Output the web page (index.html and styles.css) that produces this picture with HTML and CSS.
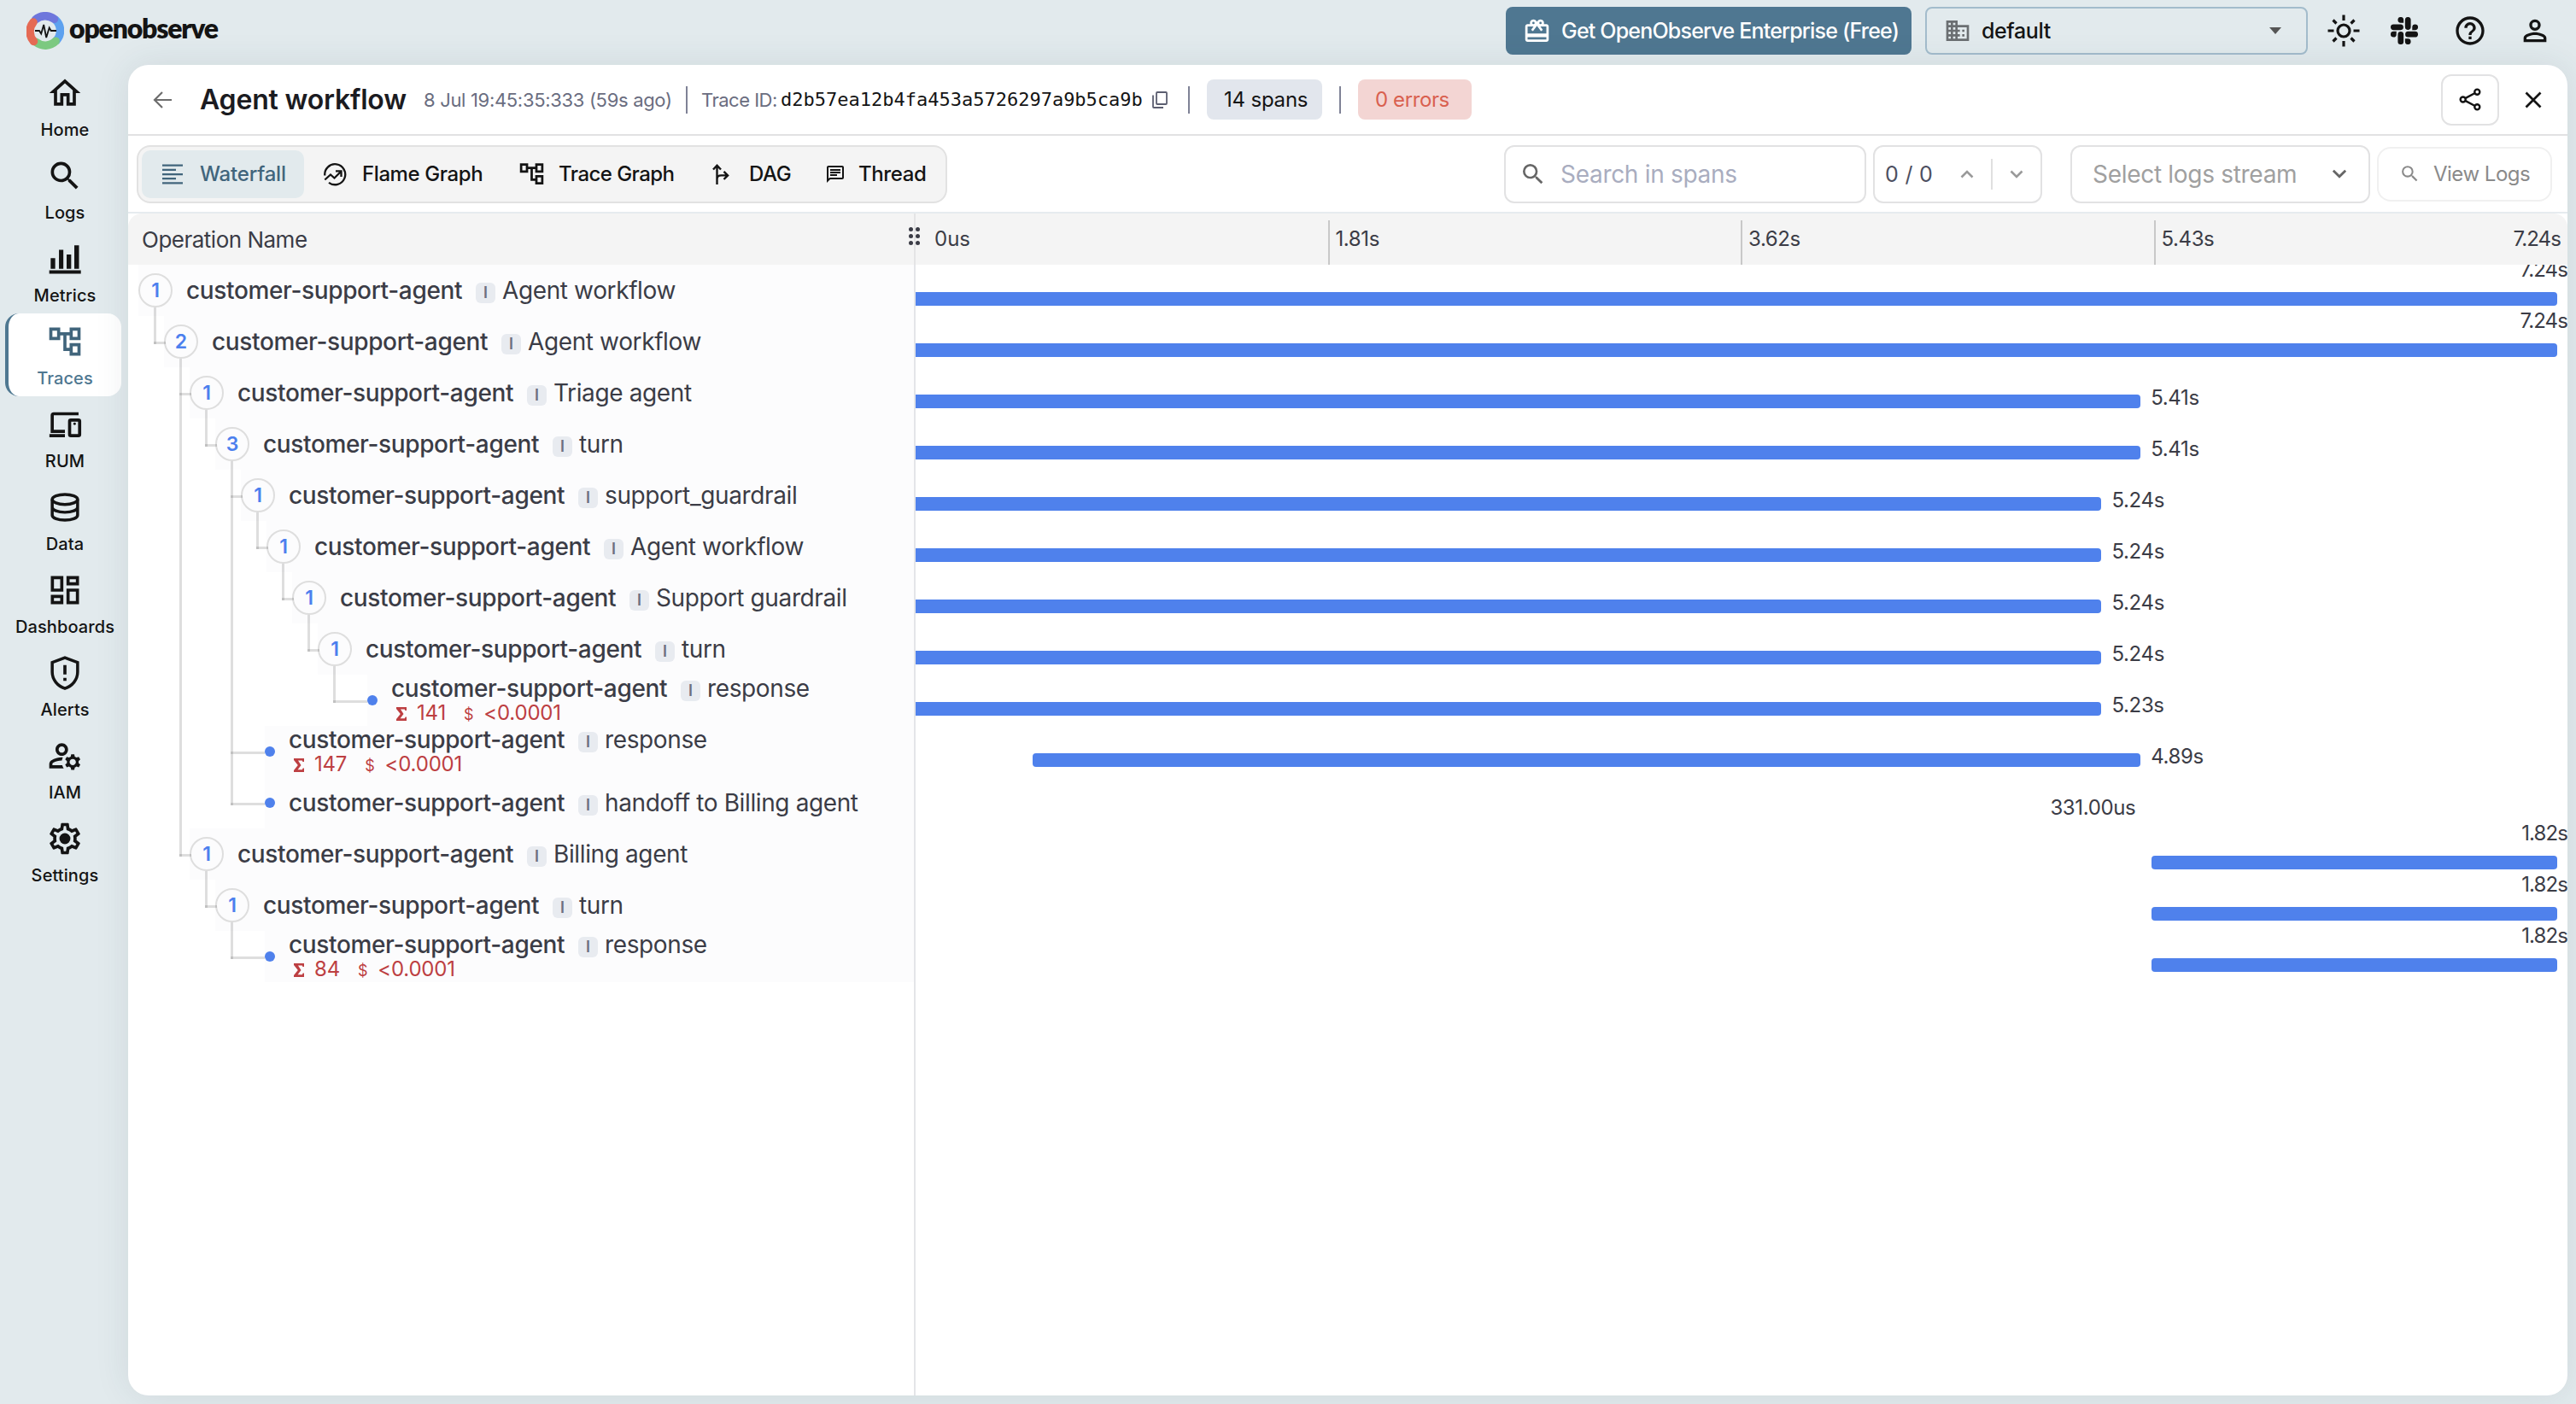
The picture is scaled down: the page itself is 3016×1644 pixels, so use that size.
FILE: index.html
```
<!DOCTYPE html>
<html lang="en">
<head>
    <meta charset="utf-8">
    <title>OpenObserve - Traces</title>
    <link rel="stylesheet" href="styles.css">
</head>
<body>
    <svg class="sprite">
        <symbol id="i-search" viewBox="0 0 24 24"><path d="M15.5 14h-.79l-.28-.27A6.471 6.471 0 0 0 16 9.5 6.5 6.5 0 1 0 9.5 16c1.61 0 3.09-.59 4.23-1.57l.27.28v.79l5 4.99L20.49 19l-4.99-5zm-6 0C7.01 14 5 11.99 5 9.5S7.01 5 9.5 5 14 7.01 14 9.5 11.99 14 9.5 14z"/></symbol>
        <symbol id="i-tree" viewBox="0 0 24 24"><path d="M22 11V3h-7v3H9V3H2v8h7V8h2v10h4v3h7v-8h-7v3h-2V8h2v3h7zM7 9H4V5h3v4zm10 6h3v4h-3v-4zm0-10h3v4h-3V5z"/></symbol>
        <symbol id="i-down" viewBox="0 0 16 10"><path d="M1.5 1.5 8 8l6.5-6.5" fill="none" stroke="currentColor" stroke-width="2.6"/></symbol>
        <symbol id="i-up" viewBox="0 0 16 10"><path d="M1.5 8.5 8 2l6.5 6.5" fill="none" stroke="currentColor" stroke-width="2.6"/></symbol>
    </svg>

    <header class="topbar">
        <div class="logo">
            <svg class="logo-mark" viewBox="0 0 44 44">
                <g fill="none" stroke-width="9.5" stroke-linecap="round">
                    <path d="M34.4 9.6A17.200 17.200 0 0 1 35 33.5" stroke="#5da1ef"/>
                    <path d="M34.2 34.2A17.200 17.200 0 0 1 11 35.2" stroke="#7cc981"/>
                    <path d="M10.5 9A17.200 17.200 0 0 1 32.5 8.3" stroke="#6e77dc"/>
                    <path d="M8.5 34.5A17.200 17.200 0 0 1 8 12" stroke="#e56a54"/>
                </g>
                <path d="M10 22h5l2.200 3.500 3-10.500 3 15 3.500-11.500 2 3.500h6.300" fill="none" stroke="#141414" stroke-width="1.8"/>
            </svg>
            <span class="logo-text">openobserve</span>
        </div>
        <button class="enterprise-btn">
            <svg viewBox="0 0 24 24"><path d="M20 6h-2.200c.15-.3.200-.65.200-1a3 3 0 0 0-5.500-1.650L12 4l-.5-.65A3 3 0 0 0 6 5c0 .35.050.7.200 1H4c-1.110 0-2 .890-2 2v11c0 1.110.890 2 2 2h16c1.110 0 2-.89 2-2V8c0-1.110-.89-2-2-2zm-5-2a1 1 0 1 1 0 2 1 1 0 0 1 0-2zM9 4a1 1 0 1 1 0 2 1 1 0 0 1 0-2zm11 15H4v-2h16v2zm0-5H4V8h5.080L7 10.830 8.620 12 12 7.400l3.380 4.600L17 10.830 14.920 8H20v6z"/></svg>
            <span>Get OpenObserve Enterprise (Free)</span>
        </button>
        <div class="org-select">
            <svg class="org-icon" viewBox="0 0 24 24"><path d="M12 7V3H2v18h20V7H12zM6 19H4v-2h2v2zm0-4H4v-2h2v2zm0-4H4V9h2v2zm0-4H4V5h2v2zm4 12H8v-2h2v2zm0-4H8v-2h2v2zm0-4H8V9h2v2zm0-4H8V5h2v2zm10 12h-8v-2h2v-2h-2v-2h2v-2h-2V9h8v10zm-2-8h-2v2h2v-2zm0 4h-2v2h2v-2z"/></svg>
            <span class="org-name">default</span>
            <svg class="caret" viewBox="0 0 14 8"><path d="M0 0h14L7 8z"/></svg>
        </div>
        <svg class="top-icon" viewBox="0 0 40 40"><g fill="none" stroke="currentColor" stroke-width="3.2"><circle cx="20" cy="20" r="7"/><path d="M20 1.500v6.500M20 32v6.500M1.500 20h7M31.500 20h7M7.500 7.500l4 4M28.500 28.500l4 4M7.500 32.500l4-4M28.500 11.500l4-4"/></g></svg>
        <svg class="top-icon slack" viewBox="0 0 24 24"><path d="M5.040 15.170a2.530 2.530 0 1 1-2.520-2.530h2.520v2.530zm1.270 0a2.530 2.530 0 0 1 5.050 0v6.310a2.520 2.520 0 1 1-5.050 0v-6.310zM8.830 5.040a2.530 2.530 0 1 1 2.530-2.520v2.520H8.830zm0 1.270a2.530 2.530 0 0 1 0 5.050H2.520a2.520 2.520 0 1 1 0-5.050h6.310zm10.130 2.520a2.530 2.530 0 1 1 2.520 2.530h-2.520V8.830zm-1.270 0a2.530 2.530 0 0 1-5.050 0V2.520a2.520 2.520 0 1 1 5.050 0v6.310zm-2.520 10.130a2.530 2.530 0 1 1-2.530 2.520v-2.520h2.530zm0-1.270a2.530 2.530 0 0 1 0-5.050h6.310a2.520 2.520 0 1 1 0 5.050h-6.310z"/></svg>
        <svg class="top-icon help" viewBox="0 0 24 24"><path d="M11 18h2v-2h-2v2zm1-16C6.480 2 2 6.480 2 12s4.480 10 10 10 10-4.480 10-10S17.520 2 12 2zm0 18c-4.410 0-8-3.590-8-8s3.590-8 8-8 8 3.590 8 8-3.590 8-8 8zm0-14c-2.210 0-4 1.790-4 4h2c0-1.100.900-2 2-2s2 .900 2 2c0 2-3 1.750-3 5h2c0-2.250 3-2.500 3-5 0-2.210-1.790-4-4-4z"/></svg>
        <svg class="top-icon" viewBox="0 0 24 24"><path d="M12 6a2 2 0 1 1 0 4 2 2 0 0 1 0-4m0 9c2.700 0 5.800 1.290 6 2v1H6v-.99c.200-.72 3.300-2.010 6-2.010m0-11C9.790 4 8 5.790 8 8s1.790 4 4 4 4-1.790 4-4-1.790-4-4-4zm0 9c-2.670 0-8 1.340-8 4v3h16v-3c0-2.660-5.330-4-8-4z"/></svg>
    </header>

    <div class="layout">
        <nav class="sidebar">
            <a class="nav-item">
                <svg viewBox="0 0 24 24"><path d="M12 5.690l5 4.500V18h-2v-6H9v6H7v-7.810l5-4.500M12 3L2 12h3v8h6v-6h2v6h6v-8h3L12 3z"/></svg>
                <span>Home</span>
            </a>
            <a class="nav-item">
                <svg><use href="#i-search"/></svg>
                <span>Logs</span>
            </a>
            <a class="nav-item">
                <svg viewBox="0 0 24 24"><path d="M2.900 11.600h2.900v6.800H2.900zM8.200 6.300h2.800v12.100H8.200zM13.100 9.300H16v9.100h-2.900zM18 3.400h3v15h-3zM2 19.400h20.200v2.100H2z"/></svg>
                <span>Metrics</span>
            </a>
            <a class="nav-item active">
                <svg><use href="#i-tree"/></svg>
                <span>Traces</span>
            </a>
            <a class="nav-item">
                <svg viewBox="0 0 24 24"><g fill="none" stroke="currentColor" stroke-width="2"><path d="M20.700 5.200H4.900a1 1 0 0 0-1 1v10.200H12M2.100 19.200H12"/><rect x="15" y="9.200" width="6.400" height="10" rx=".8"/></g><circle cx="18.200" cy="11.600" r=".8"/></svg>
                <span>RUM</span>
            </a>
            <a class="nav-item">
                <svg viewBox="0 0 24 24"><g fill="none" stroke="currentColor" stroke-width="1.900"><ellipse cx="12" cy="7" rx="8.100" ry="3.200"/><path d="M3.900 7v10c0 1.800 3.600 3.200 8.100 3.200s8.100-1.400 8.100-3.200V7M3.900 12c0 1.800 3.600 3.200 8.100 3.200s8.100-1.400 8.100-3.200"/></g></svg>
                <span>Data</span>
            </a>
            <a class="nav-item">
                <svg viewBox="0 0 24 24"><path d="M19 5v2h-4V5h4M9 5v6H5V5h4m10 8v6h-4v-6h4M9 17v2H5v-2h4M21 3h-8v6h8V3zM11 3H3v10h8V3zm10 8h-8v10h8V11zm-10 4H3v6h8v-6z"/></svg>
                <span>Dashboards</span>
            </a>
            <a class="nav-item">
                <svg viewBox="0 0 24 24"><path d="M12 2.200l8.100 3.100V11.500c0 4.700-3.400 8.900-8.100 10.400-4.700-1.500-8.100-5.700-8.100-10.400V5.300z" fill="none" stroke="currentColor" stroke-width="1.900"/><path d="M11 7h2v6h-2zM11 15.200h2V17h-2z"/></svg>
                <span>Alerts</span>
            </a>
            <a class="nav-item">
                <svg viewBox="0 0 24 24"><path d="M4 18v-.65c0-.34.160-.66.410-.81C6.100 15.530 8.030 15 10 15c.030 0 .050 0 .080.010.100-.7.300-1.370.590-1.980-.22-.02-.44-.03-.67-.03-2.420 0-4.680.670-6.610 1.820-.88.520-1.390 1.500-1.390 2.530V20h9.260c-.42-.6-.75-1.280-.97-2H4zM10 12c2.210 0 4-1.790 4-4s-1.790-4-4-4-4 1.790-4 4 1.790 4 4 4zm0-6c1.100 0 2 .9 2 2s-.9 2-2 2-2-.9-2-2 .9-2 2-2zM20.750 16c0-.22-.03-.42-.06-.63l1.140-1.010-1-1.730-1.450.490c-.32-.27-.68-.48-1.080-.63L18 11h-2l-.3 1.490c-.4.150-.76.360-1.080.630l-1.450-.49-1 1.730 1.140 1.010c-.03.210-.06.410-.06.630s.030.420.060.630l-1.140 1.010 1 1.730 1.450-.49c.320.270.680.480 1.080.630L16 21h2l.3-1.490c.4-.15.760-.36 1.080-.63l1.450.490 1-1.730-1.140-1.010c.030-.21.060-.41.060-.63zM17 18c-1.100 0-2-.9-2-2s.9-2 2-2 2 .9 2 2-.9 2-2 2z"/></svg>
                <span>IAM</span>
            </a>
            <a class="nav-item">
                <svg viewBox="0 0 24 24"><path d="M19.430 12.980c.040-.32.070-.64.070-.98 0-.34-.03-.66-.07-.98l2.110-1.650c.190-.15.240-.42.120-.64l-2-3.460a.5.5 0 0 0-.61-.22l-2.490 1c-.52-.4-1.080-.73-1.690-.98l-.38-2.650A.488.488 0 0 0 14 2h-4c-.25 0-.46.180-.49.420l-.38 2.650c-.61.250-1.170.590-1.690.980l-2.490-1a.566.566 0 0 0-.18-.03c-.17 0-.34.090-.43.250l-2 3.460c-.13.220-.07.490.120.640l2.110 1.650c-.04.320-.07.650-.07.980 0 .330.030.660.070.980l-2.110 1.650c-.19.150-.24.420-.12.640l2 3.460a.5.5 0 0 0 .610.220l2.490-1c.520.400 1.080.730 1.690.980l.38 2.650c.030.240.240.420.490.420h4c.250 0 .460-.18.490-.42l.38-2.650c.610-.25 1.170-.59 1.690-.98l2.490 1c.060.020.120.030.180.030.170 0 .340-.09.430-.25l2-3.460c.120-.22.070-.49-.12-.64l-2.110-1.650zm-1.980-1.710c.040.310.050.520.050.730 0 .210-.02.430-.05.730l-.14 1.130.89.700 1.080.840-.7 1.210-1.270-.51-1.040-.42-.9.680c-.43.320-.84.560-1.250.730l-1.060.430-.16 1.130-.2 1.350h-1.400l-.19-1.350-.16-1.130-1.060-.43c-.43-.18-.83-.41-1.230-.71l-.91-.7-1.060.430-1.270.510-.7-1.210 1.080-.84.890-.7-.14-1.130c-.03-.31-.05-.54-.05-.74s.020-.43.050-.73l.14-1.130-.89-.7-1.080-.84.700-1.210 1.270.510 1.040.420.900-.68c.430-.32.840-.56 1.250-.73l1.060-.43.160-1.130.200-1.350h1.390l.19 1.350.16 1.130 1.060.430c.430.180.830.410 1.230.710l.91.700 1.060-.43 1.270-.51.700 1.210-1.070.850-.89.700.14 1.130z"/><circle cx="12" cy="12" r="3.500"/></svg>
                <span>Settings</span>
            </a>
        </nav>

        <main class="card">
            <div class="trace-header">
                <svg class="back" viewBox="0 0 22 20"><path d="M22 10H2M11 1L2 10l9 9" fill="none" stroke="currentColor" stroke-width="2.2"/></svg>
                <h1>Agent workflow</h1>
                <span class="date">8 Jul 19:45:35:333 (59s ago)</span>
                <span class="sep"></span>
                <span class="trace-label">Trace ID:</span>
                <code class="trace-id">d2b57ea12b4fa453a5726297a9b5ca9b</code>
                <svg class="copy" viewBox="0 0 18 20"><g fill="none" stroke="currentColor" stroke-width="1.8"><rect x="5" y="1" width="12" height="14" rx="1"/><path d="M1 4.500V18a1 1 0 0 0 1 1h11"/></g></svg>
                <span class="sep"></span>
                <span class="chip">14 spans</span>
                <span class="sep"></span>
                <span class="chip chip-error">0 errors</span>
                <button class="share-btn">
                    <svg viewBox="0 0 26 26"><g fill="none" stroke="currentColor" stroke-width="2.3"><circle cx="4.500" cy="13" r="2.900"/><circle cx="20.500" cy="4.500" r="2.900"/><circle cx="20.500" cy="21.500" r="2.900"/><path d="M7 11.700L18 5.800M7 14.300l11 5.900"/></g></svg>
                </button>
                <svg class="close" viewBox="0 0 20 20"><path d="M1.500 1.500l17 17M18.500 1.500l-17 17" stroke="currentColor" stroke-width="2.7"/></svg>
            </div>

            <div class="toolbar">
                <div class="tabs">
                    <div class="tab tab-waterfall active">
                        <svg viewBox="0 0 28 28"><path d="M2 2.500h24v2.200H2zM2 7.800h16V10H2zM2 13h24v2.200H2zM2 18h16v2.200H2zM2 23.300h24v2.200H2z"/></svg>
                        <span>Waterfall</span>
                    </div>
                    <div class="tab tab-flame">
                        <svg viewBox="0 0 28 28"><g fill="none" stroke="currentColor" stroke-width="2.3"><path d="M2.300 15.500A12 12 0 1 1 7 23.800M2.300 20.500l6.700-6 4.500 4L21 11M15 10.300h6.500V17"/></g></svg>
                        <span>Flame Graph</span>
                    </div>
                    <div class="tab tab-trace">
                        <svg class="big"><use href="#i-tree"/></svg>
                        <span>Trace Graph</span>
                    </div>
                    <div class="tab tab-dag">
                        <svg viewBox="0 0 28 28"><g fill="none" stroke="currentColor" stroke-width="2.4"><path d="M9.500 26V3.500M5 8.500l4.500-4.800L14 8.500M9.500 20c0-4 2-4.600 5-4.600h7M17.500 10.800l4.600 4.600-4.600 4.600"/></g></svg>
                        <span>DAG</span>
                    </div>
                    <div class="tab tab-thread">
                        <svg viewBox="0 0 24 24"><path d="M4 4h16v12H5.170L4 17.170V4m0-2c-1.100 0-1.990.9-1.990 2L2 22l4-4h14c1.100 0 2-.9 2-2V4c0-1.100-.9-2-2-2H4zm2 10h8v2H6v-2zm0-3h12v2H6V9zm0-3h12v2H6V6z"/></svg>
                        <span>Thread</span>
                    </div>
                </div>
                <div class="search-box">
                    <svg><use href="#i-search"/></svg>
                    <span>Search in spans</span>
                </div>
                <div class="counter">
                    <span>0 / 0</span>
                    <svg class="chev"><use href="#i-up"/></svg>
                    <i></i>
                    <svg class="chev"><use href="#i-down"/></svg>
                </div>
                <div class="stream-select">
                    <span>Select logs stream</span>
                    <svg><use href="#i-down"/></svg>
                </div>
                <div class="view-logs">
                    <svg><use href="#i-search"/></svg>
                    <span>View Logs</span>
                </div>
            </div>

            <div class="table-head">
                <div class="head-name">
                    <span>Operation Name</span>
                    <div class="grip"><b></b><b></b><b></b><b></b><b></b><b></b></div>
                </div>
                <div class="ticks">
                    <span class="first">0us</span>
                    <span>1.81s</span>
                    <span>3.62s</span>
                    <span>5.43s</span>
                    <em>7.24s</em>
                </div>
            </div>
            <div class="table-body">
                <div class="tree" id="tree"></div>
                <div class="timeline" id="timeline"></div>
            </div>
        </main>
    </div>

    <script src="spans.js"></script>
</body>
</html>
```
FILE: styles.css
```
* {
    box-sizing: border-box;
}
body {
    margin: 0;
    width: 3016px;
    height: 1644px;
    overflow: hidden;
    background: #e2eaed;
    font-family: Inter, "Liberation Sans", sans-serif;
    color: #141414;
}
svg {
    fill: currentColor;
    flex: none;
    display: block;
}
.sprite {
    position: absolute;
    width: 0;
    height: 0;
}

/* top bar */
.topbar {
    height: 76px;
    padding: 8px 28px 12px 31px;
    display: flex;
    align-items: center;
}
.logo {
    display: flex;
    align-items: center;
    flex: 1;
}
.logo-mark {
    width: 44px;
    height: 44px;
}
.logo-text {
    font-family: Lato, sans-serif;
    font-weight: 800;
    font-size: 32px;
    line-height: 40px;
    margin: -6px 0 0 6px;
    letter-spacing: -1.2px;
}
.enterprise-btn {
    width: 475px;
    height: 56px;
    padding: 0 0 0 20px;
    border: none;
    border-radius: 8px;
    background: #4f7791;
    color: #fff;
    font: 500 25px Inter, sans-serif;
    letter-spacing: -0.8px;
    display: flex;
    align-items: center;
    gap: 12px;
    white-space: nowrap;
}
.enterprise-btn svg {
    width: 33px;
    height: 33px;
}
.org-select {
    width: 448px;
    height: 56px;
    margin: 0 22px 0 16px;
    padding: 0 29px 0 20px;
    border: 2px solid #a3bccc;
    border-radius: 8px;
    display: flex;
    align-items: center;
    font-size: 25px;
    font-weight: 500;
}
.org-icon {
    width: 32px;
    height: 32px;
    color: #6b6f72;
}
.org-name {
    flex: 1;
    margin-left: 12px;
    letter-spacing: -0.4px;
}
.caret {
    width: 14px;
    height: 8px;
    color: #555;
}
.top-icon {
    width: 40px;
    height: 40px;
    margin-right: 34px;
}
.top-icon:last-child {
    margin-right: 0;
}
.slack {
    width: 32px;
    height: 32px;
    margin: 0 41px 0 1px;
}
.help {
    margin-right: 36px;
}

.layout {
    display: flex;
}
.sidebar {
    width: 150px;
    padding-left: 6px;
}
.nav-item {
    width: 136px;
    height: 97px;
    padding-top: 11px;
    border-left: 4px solid transparent;
    border-radius: 16px;
    display: flex;
    flex-direction: column;
    align-items: center;
    font-size: 20px;
    font-weight: 500;
    line-height: 24px;
    letter-spacing: 0.1px;
}
.nav-item svg {
    width: 44px;
    height: 44px;
    margin-bottom: 9px;
}
.nav-item.active {
    background: #fff;
    border-left-color: #4f7891;
    color: #4f7891;
}
.nav-item.active svg {
    color: #41657c;
}

.card {
    width: 2856px;
    height: 1558px;
    background: #fff;
    border-radius: 24px;
    box-shadow: 0 0 40px rgba(40, 70, 80, 0.1);
    overflow: hidden;
    display: flex;
    flex-direction: column;
}

/* trace header */
.trace-header {
    height: 83px;
    padding: 0 30px 0 29px;
    border-bottom: 2px solid #e2e2e3;
    display: flex;
    align-items: center;
    white-space: nowrap;
}
.back {
    width: 22px;
    height: 20px;
    color: #6d6d6d;
}
h1 {
    width: 262px;
    margin: 0 0 0 33px;
    font-size: 32px;
    font-weight: 600;
    letter-spacing: -0.2px;
    color: #1b1b21;
}
.date {
    width: 307px;
    font-size: 22px;
    letter-spacing: -0.32px;
    color: #6a6d80;
}
.sep {
    width: 2px;
    height: 32px;
    background: #7f8296;
}
.trace-label {
    width: 93px;
    margin-left: 16px;
    font-size: 22px;
    letter-spacing: -0.5px;
    color: #6a6d80;
}
.trace-id {
    font: 22px "DejaVu Sans Mono", monospace;
    width: 423px;
    color: #141414;
}
.copy {
    width: 18px;
    height: 20px;
    margin: 0 24px 0 12px;
    color: #5b5e70;
}
.chip {
    width: 135px;
    height: 47px;
    margin: 0 20px;
    padding-left: 20px;
    border-radius: 8px;
    background: #e2e6ed;
    font-size: 24px;
    letter-spacing: -0.2px;
    line-height: 47px;
}
.chip-error {
    width: 133px;
    letter-spacing: -0.4px;
    background: #f3d5d3;
    color: #d9604f;
}
.share-btn {
    width: 68px;
    height: 60px;
    margin-left: auto;
    border: 2px solid #e2e2e3;
    border-radius: 12px;
    background: #fff;
    color: #141414;
    display: flex;
    align-items: center;
    justify-content: center;
}
.share-btn svg {
    width: 27px;
    height: 27px;
}
.close {
    width: 20px;
    height: 20px;
    margin-left: 30px;
}

/* toolbar */
.toolbar {
    height: 91px;
    padding: 0 18px 0 10px;
    border-bottom: 2px solid #e6ebef;
    display: flex;
    align-items: center;
    white-space: nowrap;
}
.tabs {
    height: 68px;
    padding: 4px;
    border: 2px solid #e2e2e2;
    border-radius: 16px;
    background: #f4f4f4;
    display: flex;
}
.tab {
    height: 56px;
    padding-left: 22px;
    border-radius: 10px;
    display: flex;
    align-items: center;
    gap: 18px;
    font-size: 24px;
    font-weight: 500;
    letter-spacing: -0.4px;
}
.tab svg {
    width: 28px;
    height: 28px;
}
.tab svg.big {
    width: 33px;
    height: 33px;
    margin: 0 -2.5px;
}
.tab.active {
    background: #e2eaed;
    color: #41657c;
    letter-spacing: -0.2px;
}
.tab-waterfall {
    width: 190px;
}
.tab-flame {
    width: 230px;
}
.tab-trace {
    width: 222px;
    letter-spacing: -0.55px;
}
.tab-dag {
    width: 138px;
    padding-left: 22px;
    gap: 19px;
}
.tab-thread {
    width: 157px;
    padding-left: 20px;
    gap: 15px;
}
.tab-thread svg {
    width: 24px;
    height: 24px;
}
.search-box {
    width: 424px;
    height: 68px;
    margin-left: auto;
    padding-left: 16px;
    border: 2px solid #e2e2e3;
    border-radius: 12px;
    display: flex;
    align-items: center;
    gap: 16px;
    font-size: 28px;
    letter-spacing: -0.3px;
    color: #a9adbf;
}
.search-box svg {
    width: 32px;
    height: 32px;
    color: #666;
}
.counter {
    width: 198px;
    height: 68px;
    margin-left: 8px;
    padding-left: 12px;
    border: 2px solid #e2e2e3;
    border-radius: 12px;
    display: flex;
    align-items: center;
    font-size: 25px;
    color: #4d5061;
}
.counter span {
    width: 88px;
    letter-spacing: 0.3px;
}
.counter i {
    width: 2px;
    height: 36px;
    margin: 0 20px;
    background: #e0e0e0;
}
.chev {
    width: 16px;
    height: 10px;
    color: #9a9a9a;
}
.stream-select {
    width: 351px;
    height: 68px;
    margin-left: 33px;
    padding: 0 25px 0 24px;
    border: 2px solid #e2e2e3;
    border-radius: 12px;
    display: flex;
    align-items: center;
    justify-content: space-between;
    font-size: 28px;
    letter-spacing: -0.3px;
    color: #a0a0a0;
}
.stream-select svg {
    width: 18px;
    height: 11px;
    color: #666;
}
.view-logs {
    width: 205px;
    height: 64px;
    margin-left: 8px;
    padding-left: 24px;
    border: 2px solid #f0f0f0;
    border-radius: 16px;
    display: flex;
    align-items: center;
    gap: 15px;
    font-size: 24px;
    letter-spacing: -0.5px;
    color: #8a8a8a;
}
.view-logs svg {
    width: 25px;
    height: 25px;
}

/* table */
.table-head {
    height: 60px;
    background: #f4f4f4;
    border-radius: 16px 16px 0 0;
    display: flex;
    font-size: 24px;
    color: #3b3c46;
}
.head-name {
    width: 922px;
    padding: 0 0 0 16px;
    border-right: 2px solid #e4e4e5;
    display: flex;
    align-items: center;
    justify-content: space-between;
    font-size: 26px;
    letter-spacing: -0.5px;
}
/* sits on the splitter line */
.grip {
    margin: -8px -7px 0 0;
    display: grid;
    grid-template-columns: 5px 5px;
    gap: 3px;
}
.grip b {
    width: 5px;
    height: 5px;
    border-radius: 50%;
    background: #3b3c46;
}
.ticks {
    flex: 1;
    display: grid;
    grid-template-columns: repeat(4, 1fr);
    position: relative;
    line-height: 44px;
    padding-top: 8px;
    letter-spacing: -0.4px;
}
.ticks span {
    margin-left: -1px;
    padding-left: 7px;
    border-left: 2px solid #c8c8c8;
}
.ticks .first {
    padding-left: 23px;
    border-left: none;
    letter-spacing: 0;
}
.ticks em {
    position: absolute;
    right: 8px;
    top: 8px;
    font-style: normal;
    letter-spacing: -0.9px;
}
.table-body {
    flex: 1;
    display: flex;
}
.tree {
    width: 922px;
    border-right: 2px solid #e4e5e8;
}
.tree-row {
    position: relative;
    height: 60px;
    display: flex;
    align-items: center;
    white-space: nowrap;
}
.tree-cell {
    flex: 1;
    height: 60px;
    background: #fcfcfd;
    display: flex;
    align-items: center;
}
.count {
    width: 40px;
    height: 40px;
    margin-right: 16px;
    border: 2px solid #dedede;
    border-radius: 50%;
    display: flex;
    align-items: center;
    justify-content: center;
    font-size: 23px;
    font-weight: 600;
    color: #4c80ee;
}
.dot {
    width: 12px;
    height: 12px;
    margin-right: 16px;
    border-radius: 50%;
    background: #4f81ec;
}
.line-v,
.line-h {
    position: absolute;
    background: rgba(0, 0, 0, 0.13);
    z-index: 1;
}
.line-v {
    width: 3px;
    top: 50px;
}
.line-h {
    height: 3px;
    top: 30px;
}
.op {
    display: flex;
    align-items: center;
    height: 28px;
    font-size: 28px;
    letter-spacing: -0.38px;
    color: #3b3c46;
}
.op strong {
    width: 339px;
    font-weight: 500;
    letter-spacing: -0.36px;
}
.kind {
    width: 23px;
    height: 24px;
    margin: 5px 8px 0 0;
    border-radius: 6px;
    background: #e8ebf0;
    color: #6d7080;
    font-size: 18px;
    font-weight: 600;
    line-height: 24px;
    letter-spacing: 0;
    text-align: center;
}
.usage {
    display: flex;
    align-items: center;
    height: 28px;
    padding-left: 6px;
    font-size: 24px;
    letter-spacing: -0.2px;
    color: #bd3f42;
}
.usage svg {
    width: 12px;
    height: 16px;
    margin: 4px 12px 0 0;
}
.usage small {
    margin: 4px 12px 0 21px;
    font-size: 18px;
}

.timeline {
    flex: 1;
    overflow: hidden;
}
.bar-row {
    position: relative;
    height: 60px;
    padding-top: 32px;
    margin-right: 12px;
}
.bar {
    height: 16px;
    background: #4f81ec;
    border-radius: 0 4px 4px 0;
}
.bar.offset {
    border-radius: 4px;
}
.bar-label {
    position: absolute;
    top: 20px;
    font-size: 24px;
    line-height: 32px;
    letter-spacing: -0.35px;
    color: #3b3c46;
}
.bar-label.over {
    top: -10px;
    right: -12px;
    letter-spacing: -0.9px;
}
```
FILE: spans.js
```
// level, children count (0 = leaf), operation, bar start, bar end (0..1), label, tokens
const spans = [
    [0, 1, 'Agent workflow', 0, 1, '7.24s'],
    [1, 2, 'Agent workflow', 0, 1, '7.24s'],
    [2, 1, 'Triage agent', 0, 0.7462, '5.41s'],
    [3, 3, 'turn', 0, 0.7462, '5.41s'],
    [4, 1, 'support_guardrail', 0, 0.7224, '5.24s'],
    [5, 1, 'Agent workflow', 0, 0.7224, '5.24s'],
    [6, 1, 'Support guardrail', 0, 0.7224, '5.24s'],
    [7, 1, 'turn', 0, 0.7224, '5.24s'],
    [8, 0, 'response', 0, 0.7224, '5.23s', 141],
    [4, 0, 'response', 0.0714, 0.7462, '4.89s', 147],
    [4, 0, 'handoff to Billing agent', 0.7462, 0.7462, '331.00us'],
    [2, 1, 'Billing agent', 0.7528, 1, '1.82s'],
    [3, 1, 'turn', 0.7528, 1, '1.82s'],
    [4, 0, 'response', 0.7528, 1, '1.82s', 84]
];

const tree = document.getElementById('tree');
const timeline = document.getElementById('timeline');
const sigma = '<svg viewBox="0 0 12 16"><path d="M0 0h12v4h-1.500l-.8-1.500H5l3.500 5.500L4.600 13.200h5.200l.9-1.700H12V16H0v-2l4.800-6L0 2z"/></svg>';

spans.forEach(([level, count, op, start, end, label, tokens], i) => {
    const left = (count ? 12 : 40) + level * 30;
    let lines = '';
    if (level > 0) {
        const x = level * 30;
        lines += `<div class="line-h" style="left:${x}px;width:${(count ? 14 : 40)}px"></div>`;
    }
    if (count) {
        // run the vertical line down to the last direct child
        let last = i;
        for (let j = i + 1; j < spans.length && spans[j][0] > level; j++) {
            if (spans[j][0] === level + 1) last = j;
        }
        const h = (last - i) * 60 - 17;
        lines += `<div class="line-v" style="left:${30 + level * 30}px;height:${h}px"></div>`;
    }
    const usage = tokens
        ? `<div class="usage">${sigma}${tokens}<small>$</small>&lt;0.0001</div>`
        : '';
    tree.insertAdjacentHTML('beforeend', `
        <div class="tree-row" style="padding-left:${left}px">
            ${lines}
            <div class="tree-cell">
                ${count ? `<div class="count">${count}</div>` : '<div class="dot"></div>'}
                <div>
                    <div class="op"><strong>customer-support-agent</strong><span class="kind">I</span>${op}</div>
                    ${usage}
                </div>
            </div>
        </div>`);

    let labelHtml;
    if (end === 1) {
        labelHtml = `<span class="bar-label over">${label}</span>`;
    } else if (start === end) {
        labelHtml = `<span class="bar-label" style="right:${(1 - end) * 100 + 0.3}%">${label}</span>`;
    } else {
        labelHtml = `<span class="bar-label" style="left:calc(${end * 100}% + 12px)">${label}</span>`;
    }
    timeline.insertAdjacentHTML('beforeend', `
        <div class="bar-row">
            <div class="bar${start ? ' offset' : ''}" style="margin-left:${start * 100}%;width:${(end - start) * 100}%"></div>
            ${labelHtml}
        </div>`);
});
```
